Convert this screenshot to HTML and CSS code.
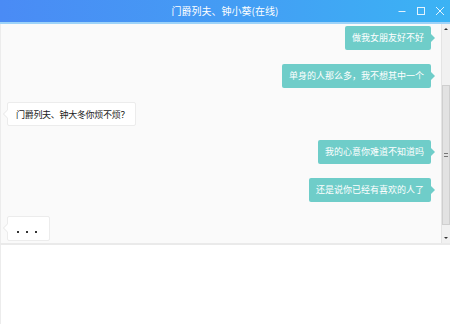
FILE: index.html
```html
<!DOCTYPE html>
<html lang="zh">
<head>
<meta charset="utf-8">
<link rel="stylesheet" href="styles.css">
</head>
<body>
<div class="window">
  <header class="titlebar">
    <span></span>
    <span class="title">门爵列夫、钟小葵(在线)</span>
    <div class="controls">
      <svg class="ctl" width="10" height="10" viewBox="0 0 10 10"><path d="M1.5 5.5H8.5" stroke="#fff" stroke-width="1" opacity="0.85"/></svg>
      <svg class="ctl" width="10" height="10" viewBox="0 0 10 10"><rect x="1.5" y="1.5" width="7" height="7" fill="none" stroke="#fff" stroke-width="1" opacity="0.85"/></svg>
      <svg class="ctl" width="10" height="10" viewBox="0 0 10 10"><path d="M1 1L9 9M9 1L1 9" stroke="#fff" stroke-width="1" opacity="0.85"/></svg>
    </div>
  </header>
  <div class="titleline"></div>
  <div class="chat">
    <div class="messages">
      <div class="row right"><div class="bubble out">做我女朋友好不好</div></div>
      <div class="row right"><div class="bubble out">单身的人那么多，我不想其中一个</div></div>
      <div class="row left"><div class="bubble in">门爵列夫、钟大冬你烦不烦？</div></div>
      <div class="row right"><div class="bubble out">我的心意你难道不知道吗</div></div>
      <div class="row right"><div class="bubble out">还是说你已经有喜欢的人了</div></div>
      <div class="row left"><div class="bubble in typing"><i></i><i></i><i></i></div></div>
    </div>
    <div class="scrollbar">
      <div class="arrow up"></div>
      <div class="track"><div class="thumb"><span class="grip"></span></div></div>
      <div class="arrow down"></div>
    </div>
  </div>
  <div class="divider"></div>
  <div class="input"></div>
</div>
</body>
</html>
```
FILE: styles.css
```css
* { box-sizing: border-box; }
html, body { margin: 0; padding: 0; }
body {
  width: 450px;
  height: 324px;
  overflow: hidden;
  font-family: "Noto Sans CJK SC", "Noto Sans", sans-serif;
  background: #fff;
}
.window {
  width: 450px;
  height: 324px;
  display: flex;
  flex-direction: column;
}
.titlebar {
  height: 22px;
  flex: none;
  display: grid;
  grid-template-columns: 1fr auto 1fr;
  align-items: center;
  background: linear-gradient(90deg, #4a8bf5 0%, #449cf4 50%, #3bb3f4 100%);
  color: #fff;
}
.title {
  font-size: 10px;
  line-height: 22px;
}
.controls {
  justify-self: end;
  display: flex;
  gap: 9px;
  padding-right: 5px;
  align-items: center;
}
.ctl { display: block; }
.titleline {
  height: 2px;
  flex: none;
  background: #9dd3f9;
}
.chat {
  height: 219px;
  flex: none;
  display: flex;
  background: #fafafa;
  border-left: 1px solid #ececec;
}
.messages {
  flex: 1;
  display: flex;
  flex-direction: column;
  gap: 14px;
  padding: 2px 10px 0 6px;
}
.row { display: flex; height: 24px; }
.row.right { justify-content: flex-end; }
.row.left { justify-content: flex-start; }
.bubble {
  position: relative;
  height: 24px;
  line-height: 23px;
  font-size: 9px;
  padding: 0 7px;
  border-radius: 2px;
  white-space: nowrap;
}
.bubble.out {
  background: #6fcdc9;
  color: #fff;
}
.bubble.out::after {
  content: "";
  position: absolute;
  right: -4px;
  top: 8px;
  border-top: 4px solid transparent;
  border-bottom: 4px solid transparent;
  border-left: 4px solid #6fcdc9;
}
.bubble.in {
  background: #fff;
  color: #222;
  border: 1px solid #ececec;
  padding: 0 6px 0 8px;
  letter-spacing: -0.3px;
}
.bubble.in::before {
  content: "";
  position: absolute;
  left: -5px;
  top: 7px;
  border-top: 4px solid transparent;
  border-bottom: 4px solid transparent;
  border-right: 4px solid #e6e6e6;
}
.bubble.in::after {
  content: "";
  position: absolute;
  left: -4px;
  top: 7px;
  border-top: 4px solid transparent;
  border-bottom: 4px solid transparent;
  border-right: 4px solid #fff;
}
.bubble.typing {
  height: 25px;
  width: 43px;
  display: flex;
  align-items: center;
  gap: 7px;
  padding: 7px 0 0 9px;
}
.bubble.typing i {
  display: block;
  width: 2px;
  height: 2px;
  background: #333;
}
.scrollbar {
  width: 9px;
  flex: none;
  display: flex;
  flex-direction: column;
  background: #f1f1f1;
  border-left: 1px solid #e4e4e4;
}
.arrow {
  height: 10px;
  flex: none;
  display: flex;
  align-items: center;
  justify-content: center;
}
.arrow::after {
  content: "";
  border-left: 2px solid transparent;
  border-right: 2px solid transparent;
}
.arrow.up::after { border-bottom: 2px solid #333; }
.arrow.down::after { border-top: 2px solid #333; }
.track {
  flex: 1;
  padding: 51px 0 8px 0;
  display: flex;
}
.thumb {
  flex: 1;
  background: #e2e2e2;
  border: 1px solid #cfcfcf;
  display: flex;
  align-items: center;
  justify-content: center;
}
.grip {
  width: 4px;
  height: 4px;
  border-top: 1px solid #777;
  border-bottom: 1px solid #777;
}
.divider {
  height: 2px;
  flex: none;
  background: #eaeaea;
}
.input {
  flex: 1;
  background: #fff;
  border-left: 1px solid #ececec;
}
```
